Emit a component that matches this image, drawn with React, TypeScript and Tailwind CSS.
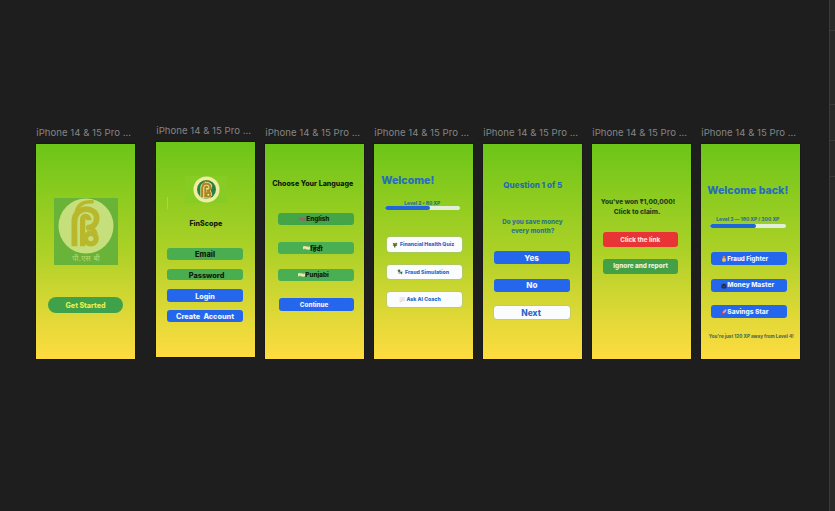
import type { ReactNode } from "react";

function Frame({ className, children }: { className: string; children: ReactNode }) {
  return (
    <section className={`w-[99px] shrink-0 ${className}`}>
      <h2 className="h-[18px] whitespace-nowrap font-[Inter,sans-serif] text-[9.6px] leading-[13px] tracking-[0.02px] text-[#858585]">
        iPhone 14 &amp; 15 Pro ...
      </h2>
      <div className="flex h-[214.5px] w-[99px] flex-col bg-linear-to-b from-[#6bc518] via-[#acd127] to-[#ffdc40] outline outline-[#151515]/60">
        {children}
      </div>
    </section>
  );
}

function Line({ className, children }: { className: string; children: ReactNode }) {
  return <p className={`flex h-[10px] shrink-0 items-center whitespace-pre pt-[1px] font-extrabold ${className}`}>{children}</p>;
}

function Button({ className, children }: { className: string; children: ReactNode }) {
  return (
    <button className={`flex w-[75.5px] shrink-0 items-center whitespace-pre rounded-[3px] pt-[1px] font-extrabold leading-none ${className}`}>
      {children}
    </button>
  );
}

function Progress({ className }: { className: string }) {
  return (
    <div className={`h-[4px] w-[75.5px] shrink-0 overflow-hidden rounded-full bg-[#e4efda] ${className}`}>
      <div className="h-full w-[45.5px] rounded-full bg-[#2166d8]" />
    </div>
  );
}

function Monogram({ color }: { color: string }) {
  return (
    <g fill="none" stroke={color} strokeLinecap="butt">
      <path d="M18 50V24C18 8 41 8 41 21C41 27 37 31 31 31" strokeWidth="6" />
      <path d="M20 14C22 6 28 3 38 4" strokeWidth="3.5" />
      <path d="M26.5 50V22C26.5 18 33 18 33 23" strokeWidth="5.5" />
      <circle cx="35" cy="42" r="5.5" strokeWidth="5.5" />
      <path d="M30 31C35 30 40 33 40 38" strokeWidth="4" />
    </g>
  );
}

function BankLogo() {
  return (
    <div className="ml-[18px] mt-[54px] flex h-[67px] w-[63.5px] shrink-0 flex-col items-center bg-[#69b339]">
      <svg viewBox="0 0 60 58" className="h-[56px] w-[58px] shrink-0">
        <circle cx="30" cy="29" r="28.5" fill="#c4df7c" />
        <Monogram color="#b9b82c" />
      </svg>
      <span className="whitespace-nowrap text-[7.5px] leading-[10px] tracking-[0.3px] text-[#b5dc72]">पी.एस बी</span>
    </div>
  );
}

function SmallLogo() {
  return (
    <div className="ml-[29px] mt-[34px] flex h-[27px] w-[42px] shrink-0 items-center justify-center bg-[#86cc25]">
      <svg viewBox="0 0 60 60" className="size-[27px]">
        <circle cx="30" cy="30" r="29" fill="#eeeda0" />
        <circle cx="30" cy="30" r="21" fill="#278044" />
        <g transform="translate(6 8) scale(.8)">
          <path d="M13 51V22C14 3 44 2 46 18L42 30L46 42L39 53Z" fill="#efe79b" />
          <Monogram color="#ad8420" />
        </g>
      </svg>
    </div>
  );
}

function Flag({ english = false }: { english?: boolean }) {
  return english ? (
    <svg viewBox="0 0 14 8" className="h-[4.5px] w-[7px]">
      <path d="M0 1Q4-1 7 1T14 1V7Q10 9 7 7T0 7Z" fill="#75766d" />
      <path d="M0 4H14M7 1V7" stroke="#b45b65" strokeWidth="1.5" />
    </svg>
  ) : (
    <svg viewBox="0 0 14 8" className="h-[4px] w-[7px]">
      <path d="M0 1Q4-1 7 1T14 1V7Q10 9 7 7T0 7Z" fill="#eee8b8" />
      <path d="M0 1Q4-1 7 1T14 1" stroke="#e7c873" strokeWidth="1.5" fill="none" />
      <path d="M0 7Q4 5 7 7T14 7" stroke="#78b668" strokeWidth="1.5" fill="none" />
    </svg>
  );
}

function Glyph({ kind }: { kind: "plant" | "spy" | "chat" | "medal" | "cap" | "rocket" }) {
  return (
    <svg viewBox="0 0 12 12" className="mr-[.5px] size-[6px] shrink-0">
      {kind === "plant" && <><path d="M1 2H5L6 5L8 1L11 3L9 6L11 8L7 8V11H4V8L1 7L3 5Z" fill="#518044" /><path d="M4 3H8V8H4Z" fill="#86582b" /></>}
      {kind === "spy" && <><path d="M1 2L6 1L7 5L3 7Z" fill="#4a683c" /><path d="M6 6L11 5L10 11L7 9Z" fill="#387346" /><path d="M3 8H6" stroke="#8b6b40" strokeWidth="2" /></>}
      {kind === "chat" && <><path d="M2 1H11V8H6L2 11Z" fill="#f2f0ee" stroke="#ddd8d7" /><path d="M3 9L9 3" stroke="#d9a9a5" /></>}
      {kind === "medal" && <><path d="M4 0H8L9 5H3Z" fill="#e47b43" /><circle cx="6" cy="8" r="4" fill="#edc14d" /></>}
      {kind === "cap" && <><path d="M0 4L6 1L12 4L6 7Z" fill="#252d42" /><path d="M1 4V10Q6 13 11 10V4L6 8Z" fill="#2b2f45" /></>}
      {kind === "rocket" && <><path d="M11 0Q5 1 3 7L5 9Q11 7 11 0Z" fill="#cfa0bc" /><path d="M4 4L1 6V9L4 8ZM4 8L1 12L6 10ZM7 8L6 11L9 9Z" fill="#df3d55" /></>}
    </svg>
  );
}

export default function App() {
  return (
    <main className="flex h-[511px] w-[835px] overflow-hidden bg-[#1e1e1e] font-[Inter,'Noto_Sans',sans-serif]">
      <div className="flex w-[829px] shrink-0 items-start gap-[10px] pl-[36.3px] pt-[126px]">
        <Frame className="mr-[11px]">
          <BankLogo />
          <Button className="ml-[11.5px] mt-[32px] h-[15.5px] justify-center rounded-full bg-[#3fa149] text-[7.1px] text-[#e7ef4e]">Get Started</Button>
        </Frame>

        <Frame className="-mt-[1.6px]">
          <SmallLogo />
          <div className="-mt-[6px] ml-[11px] h-[12px] w-px shrink-0 bg-[#a5d65c]" />
          <Line className="mt-[9.5px] justify-center text-[7.1px] text-[#101c08]">FinScope</Line>
          <Button className="ml-[11px] mt-[19.5px] h-[11.5px] justify-center bg-[#4aad50] text-[7.4px] text-[#101c08]">Email</Button>
          <Button className="ml-[11px] mt-[9px] h-[11.5px] justify-center bg-[#4aad50] pl-[3px] text-[7.3px] text-[#101c08]">Password</Button>
          <Button className="ml-[11px] mt-[9px] h-[12.5px] justify-center bg-[#2467ed] text-[7.2px] text-[#eef3ff]">Login</Button>
          <Button className="ml-[11px] mt-[8px] h-[12.5px] justify-center bg-[#2467ed] text-[7.3px] text-[#eef3ff]">Create  Account</Button>
        </Frame>

        <Frame className="">
          <Line className="mt-[35px] pl-[7px] text-[7.1px] text-[#101c08]">Choose Your Language</Line>
          <Button className="ml-[13px] mt-[24px] h-[11.5px] bg-[#44a548] pl-[21px] text-[6.3px] text-[#101c08]"><Flag english />English</Button>
          <Button className="ml-[13px] mt-[17.5px] h-[11.5px] bg-[#4aae52] pl-[25px] text-[7px] text-[#101c08]"><Flag />हिंदी</Button>
          <Button className="ml-[13px] mt-[15.5px] h-[11.5px] bg-[#4aae52] pl-[20px] text-[6.3px] text-[#101c08]"><Flag />Punjabi</Button>
          <Button className="ml-[13.5px] mt-[17.5px] h-[13px] bg-[#2467ed] pl-[21px] text-[6.3px] text-[#eef3ff]">Continue</Button>
        </Frame>

        <Frame className="">
          <Line className="mt-[31px] pl-[7px] text-[10.6px] text-[#266dbb]">Welcome!</Line>
          <Line className="mt-[13px] pl-[30px] text-[4.9px] text-[#2e7488]">Level 2 • 80 XP</Line>
          <Progress className="-mt-[2px] ml-[10.5px]" />
          <Button className="ml-[12.5px] mt-[27px] h-[14.5px] bg-[#fbfcfe] pl-[5.5px] text-[5.2px] text-[#2c65cf] ring-[.5px] ring-[#a8bf99]"><Glyph kind="plant" /> Financial Health Quiz</Button>
          <Button className="ml-[12.5px] mt-[13px] h-[14.5px] bg-[#fbfcfe] pl-[10.5px] text-[5.3px] text-[#2c65cf] ring-[.5px] ring-[#a8bf99]"><Glyph kind="spy" /> Fraud Simulation</Button>
          <Button className="ml-[12.5px] mt-[13px] h-[14.5px] bg-[#fbfcfe] pl-[12px] text-[5.2px] text-[#2c65cf] ring-[.5px] ring-[#a8bf99]"><Glyph kind="chat" /> Ask AI Coach</Button>
        </Frame>

        <Frame className="">
          <Line className="mt-[35.5px] pl-[20px] text-[8.1px] text-[#266dac]">Question 1 of 5</Line>
          <Line className="mt-[27.5px] pl-[19px] text-[6.3px] text-[#2e7488]">Do you save money</Line>
          <Line className="-mt-[1px] pl-[28px] text-[6.3px] text-[#2e7488]">every month?</Line>
          <Button className="ml-[11px] mt-[15px] h-[13px] bg-[#2467ed] pl-[30px] text-[8.1px] text-[#eef3ff]">Yes</Button>
          <Button className="ml-[11px] mt-[14.5px] h-[13px] bg-[#2467ed] pl-[32px] text-[8.1px] text-[#eef3ff]">No</Button>
          <Button className="ml-[11px] mt-[14.5px] h-[13px] bg-[#fbfcfe] pl-[27px] text-[8.4px] text-[#2c65cf] ring-[.5px] ring-[#a8bf99]">Next</Button>
        </Frame>

        <Frame className="">
          <Line className="mt-[53px] pl-[8.5px] text-[6.5px] text-[#24401c]">You've won ₹1,00,000!</Line>
          <Line className="-mt-[.5px] pl-[21.5px] text-[6.7px] text-[#24401c]">Click to claim.</Line>
          <Button className="ml-[10.5px] mt-[15.5px] h-[15px] bg-[#e93436] pl-[17.5px] text-[6.3px] text-[#ffe0df]">Click the link</Button>
          <Button className="ml-[10.5px] mt-[11.5px] h-[15px] bg-[#43a047] pl-[10.5px] text-[6.4px] text-[#e7f5e4]">Ignore and report</Button>
        </Frame>

        <Frame className="">
          <Line className="mt-[41px] pl-[6px] text-[10.6px] text-[#266dbb]">Welcome back!</Line>
          <Line className="mt-[19px] pl-[15px] text-[4.9px] text-[#2e7488]">Level 3 — 180 XP / 300 XP</Line>
          <Progress className="ml-[9px]" />
          <Button className="ml-[10px] mt-[24px] h-[13px] bg-[#2467ed] pl-[9.5px] text-[6.2px] text-[#eef3ff]"><Glyph kind="medal" />Fraud Fighter</Button>
          <Button className="ml-[10px] mt-[13.5px] h-[13px] bg-[#2467ed] pl-[9.5px] text-[6.6px] text-[#eef3ff]"><Glyph kind="cap" />Money Master</Button>
          <Button className="ml-[10px] mt-[13.5px] h-[13px] bg-[#2467ed] pl-[9.5px] text-[6.6px] text-[#eef3ff]"><Glyph kind="rocket" />Savings Star</Button>
          <Line className="mt-[13.5px] pl-[7.5px] text-[4.6px] text-[#53704f]">You're just 120 XP away from Level 4!</Line>
        </Frame>
      </div>
      <aside className="flex w-[6px] shrink-0 flex-col border-l border-[#3b3b3b] bg-[#292929]">
        <div className="h-[31px] border-b border-[#3a3a3a]" />
        <div className="h-[74px] border-b border-[#3a3a3a]" />
        <div className="h-[36px] border-b border-[#3a3a3a]" />
        <div className="h-[36px] border-b border-[#3a3a3a]" />
      </aside>
    </main>
  );
}
